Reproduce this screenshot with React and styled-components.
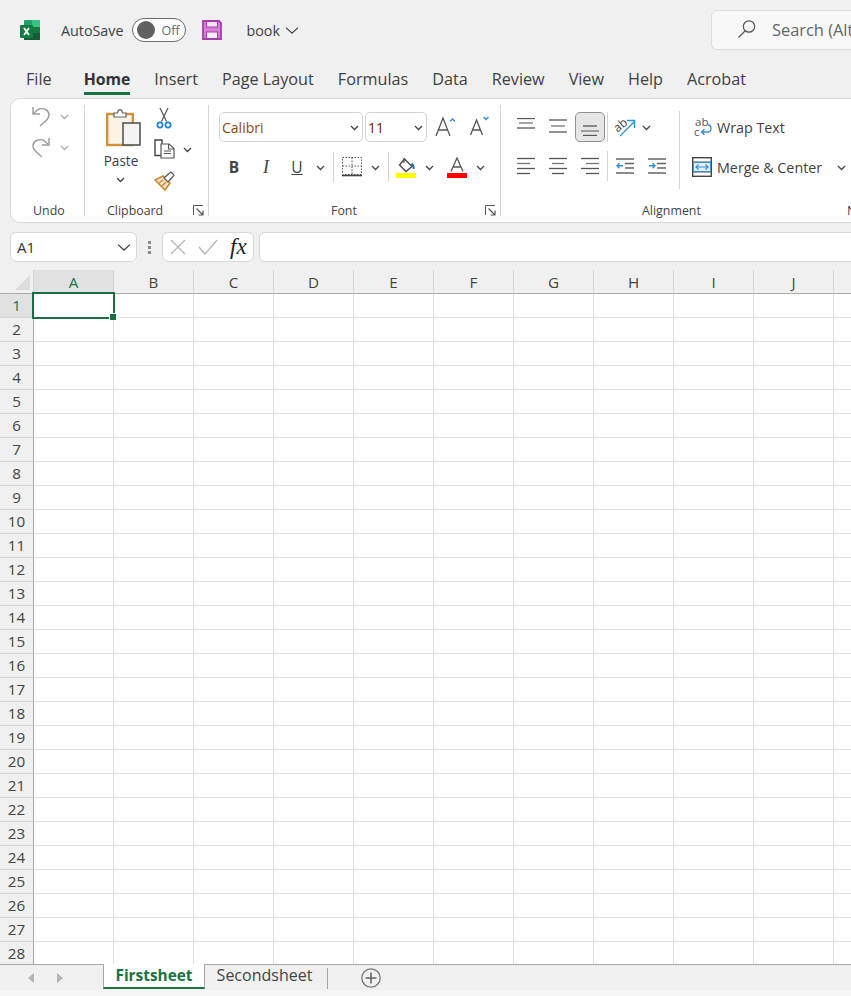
import React from "react";
import styled, { createGlobalStyle } from "styled-components";

const GlobalStyle = createGlobalStyle`
  html, body {
    margin: 0;
    padding: 0;
    background: #f0f0f0;
    overflow: hidden;
  }
  * {
    box-sizing: border-box;
  }
`;

const FONT = `"Open Sans", "Noto Sans", "Liberation Sans", sans-serif`;

const Page = styled.div`
  width: 851px;
  height: 996px;
  overflow: hidden;
  background: #f0f0f0;
  color: #444;
  font-family: ${FONT};
  display: flex;
  flex-direction: column;
`;

const TitleBar = styled.div`
  height: 60px;
  flex: none;
  display: flex;
  align-items: center;
  padding: 0 0 0 20px;
  white-space: nowrap;
`;
const AutoSave = styled.span`
  margin-left: 21px;
  font-size: 14.3px;
  color: #3f3f3f;
`;
const Toggle = styled.div`
  margin-left: 9px;
  width: 54px;
  height: 24px;
  border: 1px solid #6a6a6a;
  border-radius: 12px;
  background: #fff;
  display: flex;
  align-items: center;
  padding-left: 4px;
  font-size: 12.5px;
  color: #666;
  gap: 6px;
`;
const Knob = styled.span`
  width: 18px;
  height: 18px;
  border-radius: 50%;
  background: #616161;
`;
const SaveWrap = styled.div`
  margin-left: 16px;
  display: flex;
`;
const BookName = styled.span`
  margin-left: 24px;
  font-size: 14.3px;
  color: #3f3f3f;
`;
const BookChevron = styled.span`
  margin-left: 5px;
`;
const SearchBox = styled.div`
  margin-left: auto;
  margin-right: -40px;
  width: 180px;
  height: 40px;
  border: 1px solid #dcdcdc;
  border-radius: 6px 0 0 6px;
  background: #f8f8f8;
  display: flex;
  align-items: center;
  padding: 0 0 2px 25px;
  gap: 15px;
  font-size: 16.4px;
  color: #666;
  overflow: hidden;
`;

const TabRow = styled.nav`
  height: 38px;
  flex: none;
  display: flex;
  gap: 24px;
  padding-left: 26px;
`;
const Tab = styled.div`
  height: 35px;
  padding-top: 7px;
  font-size: 16.2px;
  line-height: 24px;
  color: #3f3f3f;
  ${(p) =>
    p.$active &&
    `
    font-weight: 700;
    font-size: 15.8px;
    color: #333;
    border-bottom: 3px solid #1a7343;
    margin-left: 8px;
  `}
`;

const Ribbon = styled.section`
  height: 125px;
  width: 900px;
  flex: none;
  margin-left: 10px;
  background: #fff;
  border: 1px solid #d8d8d8;
  border-radius: 10px;
  display: flex;
  padding: 6px 0 0;
`;
const Group = styled.div`
  width: ${(p) => p.$w}px;
  flex: none;
  height: 111px;
  display: flex;
  flex-direction: column;
  border-right: ${(p) => (p.$open ? "none" : "1px solid #d4d4d4")};
`;
const GroupBody = styled.div`
  flex: 1;
  display: flex;
  min-height: 0;
`;
const GroupFoot = styled.div`
  height: 22px;
  flex: none;
  display: flex;
  align-items: center;
  padding: 10px 4px 0 ${(p) => p.$left ?? 0}px;
  font-size: 12.4px;
  color: #444;
  white-space: nowrap;
`;
const Launcher = styled.span`
  margin-left: auto;
  display: flex;
`;

const UndoColumn = styled.div`
  display: flex;
  flex-direction: column;
  gap: 9px;
  padding: 0 0 0 20px;
`;
const IconRow = styled.div`
  display: flex;
  align-items: center;
  gap: ${(p) => p.$gap ?? 8}px;
  padding-left: ${(p) => p.$left ?? 0}px;
  padding-top: ${(p) => p.$top ?? 0}px;
`;

const PasteColumn = styled.div`
  display: flex;
  flex-direction: column;
  align-items: center;
  width: 36px;
  margin: 3px 0 0 21px;
  font-size: 13.6px;
  color: #3f3f3f;
`;
const PasteLabel = styled.span`
  margin: 3px 6px 0 0;
  line-height: 22px;
`;
const PasteChevron = styled.span`
  margin: 3px 7px 0 0;
`;
const ClipColumn = styled.div`
  display: flex;
  flex-direction: column;
  gap: 10px;
  margin: 2px 0 0 12px;
`;

const FontRows = styled.div`
  display: flex;
  flex-direction: column;
  padding: 7px 0 0 10px;
  gap: 10px;
`;
const Select = styled.div`
  width: ${(p) => p.$w}px;
  height: 30px;
  border: 1px solid #d2d2d2;
  border-radius: 5px;
  display: flex;
  align-items: center;
  justify-content: space-between;
  padding: 0 3px 0 2px;
  font-size: 14px;
  color: ${(p) => p.$color};
  margin-right: 2px;
`;
const Sep = styled.span`
  width: 1px;
  height: ${(p) => p.$h ?? 30}px;
  background: #d4d4d4;
  flex: none;
  margin: ${(p) => p.$top ?? 0}px ${(p) => p.$m ?? 8}px 0 ${(p) => p.$ml ?? p.$m ?? 8}px;
`;
const Spacer = styled.span`
  width: ${(p) => p.$w}px;
  flex: none;
`;
const StyleGlyph = styled.span`
  width: 14px;
  flex: none;
  text-align: center;
  font-family: ${(p) => (p.$serif ? `"Liberation Serif", serif` : FONT)};
  font-size: ${(p) => (p.$serif ? 18 : 15.5)}px;
  font-weight: ${(p) => (p.$bold ? 700 : 400)};
  font-style: ${(p) => (p.$serif ? "italic" : "normal")};
  text-decoration: ${(p) => (p.$under ? "underline" : "none")};
  color: #444;
`;

const AlignGrid = styled.div`
  display: flex;
  flex-direction: column;
  padding: 7px 0 0 9px;
  gap: 9px;
`;
const AlignBtn = styled.span`
  width: 32px;
  height: 30px;
  flex: none;
  display: flex;
  align-items: center;
  justify-content: center;
  ${(p) =>
    p.$on &&
    `
    background: #e6e6e6;
    border: 1px solid #8f8f8f;
    border-radius: 5px;
    width: 30px;
    margin: 0 1px;
  `}
`;
const OrientWrap = styled.span`
  margin-left: 5px;
  display: flex;
  align-items: center;
  gap: 6px;
`;
const WrapColumn = styled.div`
  display: flex;
  flex-direction: column;
  gap: 16px;
  margin-left: 12px;
  padding-top: 10px;
  font-size: 14.3px;
  color: #3f3f3f;
  white-space: nowrap;
`;
const WrapItem = styled.div`
  display: flex;
  align-items: center;
  height: 24px;
  gap: 5px;
  padding-left: ${(p) => p.$left ?? 0}px;
`;
const MergeChevron = styled.span`
  margin-left: 10px;
`;

const FormulaBar = styled.div`
  height: 47px;
  flex: none;
  display: flex;
  align-items: center;
  padding: 1px 0 0 10px;
`;
const NameBox = styled.div`
  width: 127px;
  flex: none;
  height: 30px;
  background: #fff;
  border: 1px solid #d8d8d8;
  border-radius: 6px;
  display: flex;
  align-items: center;
  justify-content: space-between;
  padding: 0 5px 0 6px;
  font-size: 15px;
  color: #333;
`;
const Dots = styled.div`
  width: 25px;
  flex: none;
  display: flex;
  flex-direction: column;
  align-items: center;
  gap: 2px;
  span {
    width: 3px;
    height: 3px;
    background: #8c8c8c;
  }
`;
const FxBox = styled.div`
  width: 92px;
  flex: none;
  height: 30px;
  background: #fff;
  border: 1px solid #d8d8d8;
  border-radius: 6px;
  display: flex;
  align-items: center;
  padding-left: 7px;
  gap: 12px;
`;
const Fx = styled.span`
  font-family: "Liberation Serif", serif;
  font-style: italic;
  font-weight: 400;
  font-size: 23px;
  color: #222;
`;
const FormulaInput = styled.div`
  margin-left: 5px;
  width: 640px;
  flex: none;
  height: 30px;
  background: #fff;
  border: 1px solid #d8d8d8;
  border-radius: 6px;
`;

const Sheet = styled.div`
  flex: none;
  display: grid;
  grid-template-columns: 34px repeat(11, 80px);
  grid-template-rows: repeat(29, 24px);
  height: 695px;
  overflow: hidden;
  background: #fff;
`;
const Corner = styled.div`
  background: #f0f0f0;
  border-bottom: 1px solid #ababab;
  border-right: 1px solid #d4d4d4;
  display: flex;
  align-items: flex-end;
  justify-content: flex-end;
  padding: 0 3px 3px 0;
  &::after {
    content: "";
    width: 15px;
    height: 15px;
    background: #dcdcdc;
    clip-path: polygon(100% 0, 100% 100%, 0 100%);
  }
`;
const ColHead = styled.div`
  background: ${(p) => (p.$active ? "#e1e1e1" : "#f0f0f0")};
  border-bottom: 1px solid #ababab;
  border-right: 1px solid #d4d4d4;
  display: flex;
  align-items: center;
  justify-content: center;
  font-size: 15.2px;
  color: ${(p) => (p.$active ? "#1a7343" : "#444")};
`;
const RowHead = styled.div`
  background: ${(p) => (p.$active ? "#e1e1e1" : "#f0f0f0")};
  border-bottom: 1px solid #d4d4d4;
  border-right: 1px solid #ababab;
  display: flex;
  align-items: center;
  justify-content: center;
  padding-bottom: 2px;
  font-size: 15.2px;
  color: ${(p) => (p.$active ? "#1a7343" : "#444")};
`;
const Cell = styled.div`
  position: relative;
  border-right: 1px solid #e0e0e0;
  border-bottom: 1px solid #e0e0e0;
`;
const Selection = styled.div`
  position: absolute;
  inset: -2px;
  border: 2px solid #1a6f42;
  z-index: 2;
  &::after {
    content: "";
    position: absolute;
    right: -3px;
    bottom: -3px;
    width: 6px;
    height: 6px;
    background: #1a6f42;
    border: 1px solid #fff;
    border-width: 1px 0 0 1px;
  }
`;

const SheetBar = styled.div`
  flex: none;
  height: 26px;
  border-top: 1px solid #a6a6a6;
  background: #f0f0f0;
  display: flex;
  align-items: stretch;
  margin-top: -1px;
  position: relative;
  z-index: 3;
`;
const NavArrows = styled.div`
  width: 103px;
  display: flex;
  align-items: center;
  gap: 23px;
  padding-left: 28px;
`;
const SheetTab = styled.div`
  margin-top: -1px;
  display: flex;
  align-items: center;
  justify-content: center;
  white-space: nowrap;
  ${(p) =>
    p.$active
      ? `
    width: 102px;
    height: 25px;
    background: #fff;
    border-left: 1px solid #a6a6a6;
    border-right: 1px solid #a6a6a6;
    border-bottom: 2px solid #1a7343;
    font-weight: 700;
    font-size: 15.4px;
    color: #1a7343;
  `
      : `
    width: 123px;
    height: 21px;
    margin-top: 3px;
    padding-bottom: 7px;
    padding-right: 3px;
    font-size: 16px;
    color: #444;
    border-right: 1px solid #a6a6a6;
  `}
`;
const AddSheet = styled.div`
  margin-left: 33px;
  display: flex;
  align-items: center;
`;
const BottomStrip = styled.div`
  flex: 1;
  background: #f5f5f5;
`;

const Svg = ({ w = 20, h = 20, children, ...rest }) => (
  <svg width={w} height={h} viewBox={`0 0 ${w} ${h}`} fill="none" style={{ display: "block", flex: "none" }} {...rest}>
    {children}
  </svg>
);

const Chevron = ({ size = 9, color = "#444", strokeWidth = 1.3 }) => (
  <Svg w={size} h={size}>
    <path d={`M1 ${size * 0.33}L${size / 2} ${size * 0.72}L${size - 1} ${size * 0.33}`} stroke={color} strokeWidth={strokeWidth} />
  </Svg>
);

const ExcelLogo = () => (
  <Svg w={20} h={20}>
    <rect x="4" y="0" width="16" height="20" rx="1" fill="#21a366" />
    <rect x="12" y="0" width="8" height="7" fill="#33c481" />
    <rect x="12" y="7" width="8" height="7" fill="#107c41" />
    <rect x="4" y="13" width="16" height="7" fill="#185c37" />
    <rect x="0" y="5" width="13" height="13" rx="1" fill="#107c41" />
    <path d="M4 8l5 7M9 8l-5 7" stroke="#fff" strokeWidth="1.8" />
  </Svg>
);

const SaveIcon = () => (
  <Svg w={20} h={20}>
    <path d="M1 1H17L19 3V19H1Z" fill="#d67ed3" stroke="#a83bb0" strokeWidth="1.8" />
    <rect x="4.5" y="1.5" width="11" height="5.5" fill="#f4e3f4" stroke="#a83bb0" strokeWidth="1" />
    <rect x="4.5" y="12" width="11" height="6.5" fill="#f7eef7" stroke="#a83bb0" strokeWidth="1" />
  </Svg>
);

const SearchIcon = () => (
  <Svg w={20} h={20}>
    <circle cx="12" cy="7.5" r="5.7" stroke="#555" strokeWidth="1.2" />
    <path d="M8 12L1.5 18.5" stroke="#555" strokeWidth="1.2" />
  </Svg>
);

const UndoIcon = ({ flip }) => (
  <Svg w={20} h={22} style={{ display: "block", transform: flip ? "scaleX(-1)" : "none" }}>
    <path d="M2 2V9H9" stroke="#9a9a9a" strokeWidth="1.4" />
    <path d="M2.5 8.5L7 4.5C11 2.5 17 4 18 9C18.6 13 16 15 13.5 17L9 21" stroke="#9a9a9a" strokeWidth="1.4" />
  </Svg>
);

const PasteIcon = () => (
  <Svg w={36} h={39}>
    <rect x="1.2" y="6" width="25.6" height="31" fill="#fbf3e6" stroke="#d68f3c" strokeWidth="2.4" />
    <path d="M8 8V5H11.5C12 0.5 16 0.5 16.5 5H20V9H8Z" fill="#fff" stroke="#666" strokeWidth="1.2" />
    <rect x="17" y="15" width="17" height="22" fill="#f4f4f4" stroke="#555" strokeWidth="1.6" />
  </Svg>
);

const CutIcon = () => (
  <Svg w={16} h={22}>
    <path d="M4 1L10.5 14.5M12 1L5.5 14.5" stroke="#555" strokeWidth="1.2" />
    <circle cx="4" cy="18" r="2.6" stroke="#1f83d4" strokeWidth="1.7" />
    <circle cx="12" cy="18" r="2.6" stroke="#1f83d4" strokeWidth="1.7" />
  </Svg>
);

const CopyIcon = () => (
  <Svg w={21} h={20}>
    <path d="M10 16.5H1V1H8V5" stroke="#444" strokeWidth="1.4" />
    <path d="M7 5H15L20 9.5V19H7Z" fill="#fff" stroke="#555" strokeWidth="1.2" />
    <path d="M14.5 5V10H20M10 12H17M10 14.5H17" stroke="#555" strokeWidth="1.1" />
  </Svg>
);

const BrushIcon = () => (
  <Svg w={21} h={20}>
    <path d="M9 5L16 12L11 19L1 9Z" fill="#fbe5c8" stroke="#d17f2a" strokeWidth="1.5" />
    <path d="M5 12L9 9M8 15L12 11" stroke="#d17f2a" strokeWidth="1.2" />
    <path d="M10 7L15 2.5L17 1L20 4L18.5 6L14 11Z" fill="#fff" stroke="#555" strokeWidth="1.2" />
  </Svg>
);

const LauncherIcon = () => (
  <Svg w={11} h={11}>
    <path d="M.5 10V.5H10" stroke="#555" strokeWidth="1" />
    <path d="M3.5 3.5L10 10M5.5 10H10V5.5" stroke="#555" strokeWidth="1.2" />
  </Svg>
);

const GrowFont = ({ down }) => (
  <Svg w={21} h={22}>
    <path d={down ? "M1.5 19L7.5 4L13.5 19M3.5 14H11.5" : "M1 20L8 2L15 20M3.5 14H12.5"} stroke="#555" strokeWidth="1.3" />
    <path d={down ? "M14.5 1L17 3.5L19.5 1" : "M15 5.5L17.5 3L20 5.5"} stroke="#2f8fd8" strokeWidth="1.4" />
  </Svg>
);

const BordersIcon = () => (
  <Svg w={20} h={20}>
    <path d="M.5.5H19.5V17.5H.5ZM10 .5V17.5M.5 9H19.5" stroke="#555" strokeWidth="1" strokeDasharray="1.5 1.5" />
    <path d="M0 18.5H20" stroke="#444" strokeWidth="1.6" />
  </Svg>
);

const FillIcon = () => (
  <Svg w={20} h={21}>
    <path d="M8.5 2L16 9.5L10 14.5L3.5 8Z" fill="#fff" stroke="#444" strokeWidth="1.3" />
    <path d="M8 1V6" stroke="#444" strokeWidth="1.1" />
    <path d="M15.5 6.5C17.5 8 18 10 17.5 12" stroke="#2472b3" strokeWidth="2" />
    <rect x="0" y="16" width="20" height="5" fill="#ffff00" />
  </Svg>
);

const FontColorIcon = () => (
  <Svg w={20} h={21}>
    <path d="M4 14.5L10 1L16 14.5M6 10H14" stroke="#555" strokeWidth="1.3" />
    <rect x="0" y="16" width="20" height="5" fill="#ff0000" />
  </Svg>
);

const Lines = ({ rows }) => (
  <Svg w={18} h={18}>
    {rows.map(([y, x1, x2], i) => (
      <path key={i} d={`M${x1} ${y}H${x2}`} stroke={i === 1 ? "#777" : "#555"} strokeWidth="1.3" />
    ))}
  </Svg>
);

const OrientIcon = () => (
  <Svg w={22} h={22}>
    <text x="0" y="13" fontFamily="Open Sans, sans-serif" fontSize="12" fill="#444" transform="rotate(-40 7 10)">
      ab
    </text>
    <path d="M6 20L20 6M13 4.5H20.5V12" stroke="#2f8fd8" strokeWidth="1.4" />
  </Svg>
);

const IndentIcon = ({ right }) => (
  <Svg w={18} h={18}>
    <path d="M0 2H18M9 6.5H18M9 11H18M0 16H18" stroke="#666" strokeWidth="1.3" />
    <path d={right ? "M1 8.8H7M4.5 6.3L7 8.8L4.5 11.3" : "M7 8.8H1M3.5 6.3L1 8.8L3.5 11.3"} stroke="#2f8fd8" strokeWidth="1.4" />
  </Svg>
);

const WrapIcon = () => (
  <Svg w={18} h={21}>
    <text x="1" y="9" fontFamily="Open Sans, sans-serif" fontSize="11.5" fill="#555">
      ab
    </text>
    <text x="0" y="19" fontFamily="Open Sans, sans-serif" fontSize="11.5" fill="#555">
      c
    </text>
    <path d="M14 8C18 8 18 15 14 15H8M10.5 12L7.5 15L10.5 18" stroke="#2f8fd8" strokeWidth="1.3" />
  </Svg>
);

const MergeIcon = () => (
  <Svg w={20} h={20}>
    <rect x=".7" y=".7" width="18.6" height="18.6" fill="#fff" stroke="#444" strokeWidth="1.4" />
    <path d="M.7 5H19.3M.7 15H19.3" stroke="#555" strokeWidth="1.2" />
    <rect x="1.4" y="5.5" width="17.2" height="9" fill="#dff0fb" stroke="#2f8fd8" />
    <path d="M4 10H16M6.5 7.5L4 10L6.5 12.5M13.5 7.5L16 10L13.5 12.5" stroke="#2f8fd8" strokeWidth="1.1" />
  </Svg>
);

const CancelIcon = () => (
  <Svg w={16} h={16}>
    <path d="M1 1L15 15M15 1L1 15" stroke="#b4b4b4" strokeWidth="1.3" />
  </Svg>
);
const EnterIcon = () => (
  <Svg w={20} h={16}>
    <path d="M1 8L7 15L19 1" stroke="#b4b4b4" strokeWidth="1.3" />
  </Svg>
);

const Triangle = ({ right }) => (
  <Svg w={6} h={12}>
    <path d={right ? "M0 1L6 6L0 11Z" : "M6 1L0 6L6 11Z"} fill="#b5b5b5" />
  </Svg>
);

const PlusCircle = () => (
  <Svg w={20} h={20}>
    <circle cx="10" cy="10" r="9.2" stroke="#777" strokeWidth="1.3" />
    <path d="M10 4.5V15.5M4.5 10H15.5" stroke="#666" strokeWidth="1.6" />
  </Svg>
);

const COLUMNS = ["A", "B", "C", "D", "E", "F", "G", "H", "I", "J", "K"];
const ROWS = Array.from({ length: 28 }, (_, i) => i + 1);

const TABS = ["Insert", "Page Layout", "Formulas", "Data", "Review", "View", "Help", "Acrobat"];

const TOP_ALIGN = [[0.5, 0, 18], [5, 2, 16], [10, 0, 18]];
const MIDDLE_ALIGN = [[2, 0, 18], [8, 2, 16], [14, 0, 18]];
const BOTTOM_ALIGN = [[8, 2, 16], [13, 0, 18], [17.5, 2, 16]];
const LEFT_ALIGN = [[1.5, 0, 18], [6.5, 0, 13], [11.5, 0, 18], [16.5, 0, 13]];
const CENTER_ALIGN = [[1.5, 0, 18], [6.5, 3, 15], [11.5, 0, 18], [16.5, 3, 15]];
const RIGHT_ALIGN = [[1.5, 0, 18], [6.5, 5, 18], [11.5, 0, 18], [16.5, 5, 18]];

const App = () => (
  <Page>
    <GlobalStyle />
    <TitleBar>
      <ExcelLogo />
      <AutoSave>AutoSave</AutoSave>
      <Toggle>
        <Knob />
        Off
      </Toggle>
      <SaveWrap>
        <SaveIcon />
      </SaveWrap>
      <BookName>book</BookName>
      <BookChevron>
        <Chevron size={14} color="#444" strokeWidth={1.2} />
      </BookChevron>
      <SearchBox>
        <SearchIcon />
        Search (Alt+Q)
      </SearchBox>
    </TitleBar>

    <TabRow>
      <Tab>File</Tab>
      <Tab $active>Home</Tab>
      {TABS.map((t) => (
        <Tab key={t}>{t}</Tab>
      ))}
    </TabRow>

    <Ribbon>
      <Group $w={74}>
        <GroupBody>
          <UndoColumn>
            <IconRow $gap={9}>
              <UndoIcon />
              <Chevron color="#aaa" />
            </IconRow>
            <IconRow $gap={9}>
              <UndoIcon flip />
              <Chevron color="#aaa" />
            </IconRow>
          </UndoColumn>
        </GroupBody>
        <GroupFoot $left={22}>Undo</GroupFoot>
      </Group>

      <Group $w={124}>
        <GroupBody>
          <PasteColumn>
            <PasteIcon />
            <PasteLabel>Paste</PasteLabel>
            <PasteChevron>
              <Chevron />
            </PasteChevron>
          </PasteColumn>
          <ClipColumn>
            <IconRow $left={2}>
              <CutIcon />
            </IconRow>
            <IconRow $gap={8}>
              <CopyIcon />
              <Chevron />
            </IconRow>
            <IconRow $top={2}>
              <BrushIcon />
            </IconRow>
          </ClipColumn>
        </GroupBody>
        <GroupFoot $left={22}>
          Clipboard
          <Launcher>
            <LauncherIcon />
          </Launcher>
        </GroupFoot>
      </Group>

      <Group $w={292}>
        <GroupBody>
          <FontRows>
            <IconRow $gap={0}>
              <Select $w={144} $color="#8a4b08">
                Calibri
                <Chevron />
              </Select>
              <Select $w={62} $color="#7a1a10">
                11
                <Chevron />
              </Select>
              <Spacer $w={6} />
              <GrowFont />
              <Spacer $w={13} />
              <GrowFont down />
            </IconRow>
            <IconRow $gap={0} $left={8}>
              <StyleGlyph $bold>B</StyleGlyph>
              <Spacer $w={18} />
              <StyleGlyph $serif>I</StyleGlyph>
              <Spacer $w={17} />
              <StyleGlyph $under>U</StyleGlyph>
              <Spacer $w={12} />
              <Chevron />
              <Sep />
              <BordersIcon />
              <Spacer $w={9} />
              <Chevron />
              <Sep $m={7} $ml={8} />
              <FillIcon />
              <Spacer $w={9} />
              <Chevron />
              <Spacer $w={13} />
              <FontColorIcon />
              <Spacer $w={9} />
              <Chevron />
            </IconRow>
          </FontRows>
        </GroupBody>
        <GroupFoot $left={122}>
          Font
          <Launcher>
            <LauncherIcon />
          </Launcher>
        </GroupFoot>
      </Group>

      <Group $w={346} $open>
        <GroupBody>
          <AlignGrid>
            <IconRow $gap={0}>
              <AlignBtn>
                <Lines rows={TOP_ALIGN} />
              </AlignBtn>
              <AlignBtn>
                <Lines rows={MIDDLE_ALIGN} />
              </AlignBtn>
              <AlignBtn $on>
                <Lines rows={BOTTOM_ALIGN} />
              </AlignBtn>
              <Sep $m={1} />
              <OrientWrap>
                <OrientIcon />
                <Chevron />
              </OrientWrap>
            </IconRow>
            <IconRow $gap={0}>
              <AlignBtn>
                <Lines rows={LEFT_ALIGN} />
              </AlignBtn>
              <AlignBtn>
                <Lines rows={CENTER_ALIGN} />
              </AlignBtn>
              <AlignBtn>
                <Lines rows={RIGHT_ALIGN} />
              </AlignBtn>
              <Sep $m={1} />
              <AlignBtn>
                <IndentIcon />
              </AlignBtn>
              <AlignBtn>
                <IndentIcon right />
              </AlignBtn>
            </IconRow>
          </AlignGrid>
          <Sep $h={78} $m={0} $ml={6} $top={6} />
          <WrapColumn>
            <WrapItem $left={2}>
              <WrapIcon />
              Wrap Text
            </WrapItem>
            <WrapItem>
              <MergeIcon />
              Merge &amp; Center
              <MergeChevron>
                <Chevron />
              </MergeChevron>
            </WrapItem>
          </WrapColumn>
        </GroupBody>
        <GroupFoot $left={141}>Alignment</GroupFoot>
      </Group>
      <Group $w={60} $open>
        <GroupBody />
        <GroupFoot>Number</GroupFoot>
      </Group>
    </Ribbon>

    <FormulaBar>
      <NameBox>
        A1
        <Chevron size={14} strokeWidth={1.3} />
      </NameBox>
      <Dots>
        <span />
        <span />
        <span />
      </Dots>
      <FxBox>
        <CancelIcon />
        <EnterIcon />
        <Fx>fx</Fx>
      </FxBox>
      <FormulaInput />
    </FormulaBar>

    <Sheet>
      <Corner />
      {COLUMNS.map((c, i) => (
        <ColHead key={c} $active={i === 0}>
          {c}
        </ColHead>
      ))}
      {ROWS.map((r) => (
        <React.Fragment key={r}>
          <RowHead $active={r === 1}>{r}</RowHead>
          {COLUMNS.map((c) => (
            <Cell key={c}>{r === 1 && c === "A" && <Selection />}</Cell>
          ))}
        </React.Fragment>
      ))}
    </Sheet>

    <SheetBar>
      <NavArrows>
        <Triangle />
        <Triangle right />
      </NavArrows>
      <SheetTab $active>Firstsheet</SheetTab>
      <SheetTab>Secondsheet</SheetTab>
      <AddSheet>
        <PlusCircle />
      </AddSheet>
    </SheetBar>
    <BottomStrip />
  </Page>
);

export default App;
